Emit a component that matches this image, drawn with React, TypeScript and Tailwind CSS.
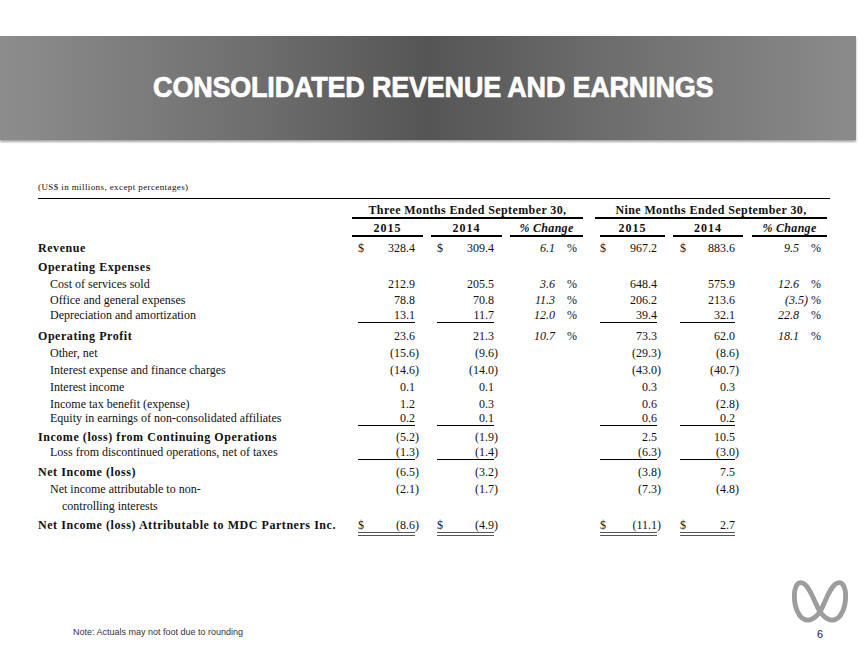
import React from "react";

type Row = {
  label: string;
  kind: "bold" | "sub" | "sub2";
  h: string;
  a?: string;
  b?: string;
  c?: string;
  d?: string;
  e?: string;
  f?: string;
  dollar?: boolean;
  line?: "single" | "double";
};

const rows: Row[] = [
  { label: "Revenue", kind: "bold", h: "h-[19px]", a: "328.4", b: "309.4", c: "6.1", d: "967.2", e: "883.6", f: "9.5", dollar: true },
  { label: "Operating Expenses", kind: "bold", h: "h-[17px]" },
  { label: "Cost of services sold", kind: "sub", h: "h-[16px]", a: "212.9", b: "205.5", c: "3.6", d: "648.4", e: "575.9", f: "12.6" },
  { label: "Office and general expenses", kind: "sub", h: "h-[15px]", a: "78.8", b: "70.8", c: "11.3", d: "206.2", e: "213.6", f: "(3.5)" },
  { label: "Depreciation and amortization", kind: "sub", h: "h-[21px]", a: "13.1", b: "11.7", c: "12.0", d: "39.4", e: "32.1", f: "22.8", line: "single" },
  { label: "Operating Profit", kind: "bold", h: "h-[17px]", a: "23.6", b: "21.3", c: "10.7", d: "73.3", e: "62.0", f: "18.1" },
  { label: "Other, net", kind: "sub", h: "h-[17px]", a: "(15.6)", b: "(9.6)", d: "(29.3)", e: "(8.6)" },
  { label: "Interest expense and finance charges", kind: "sub", h: "h-[17px]", a: "(14.6)", b: "(14.0)", d: "(43.0)", e: "(40.7)" },
  { label: "Interest income", kind: "sub", h: "h-[17px]", a: "0.1", b: "0.1", d: "0.3", e: "0.3" },
  { label: "Income tax benefit (expense)", kind: "sub", h: "h-[14px]", a: "1.2", b: "0.3", d: "0.6", e: "(2.8)" },
  { label: "Equity in earnings of non-consolidated affiliates", kind: "sub", h: "h-[19px]", a: "0.2", b: "0.1", d: "0.6", e: "0.2", line: "single" },
  { label: "Income (loss) from Continuing Operations", kind: "bold", h: "h-[15px]", a: "(5.2)", b: "(1.9)", d: "2.5", e: "10.5" },
  { label: "Loss from discontinued operations, net of taxes", kind: "sub", h: "h-[20px]", a: "(1.3)", b: "(1.4)", d: "(6.3)", e: "(3.0)", line: "single" },
  { label: "Net Income (loss)", kind: "bold", h: "h-[17px]", a: "(6.5)", b: "(3.2)", d: "(3.8)", e: "7.5" },
  { label: "Net income attributable to non-", kind: "sub", h: "h-[17px]", a: "(2.1)", b: "(1.7)", d: "(7.3)", e: "(4.8)" },
  { label: "controlling interests", kind: "sub2", h: "h-[19px]" },
  { label: "Net Income (loss) Attributable to MDC Partners Inc.", kind: "bold", h: "h-[20px]", a: "(8.6)", b: "(4.9)", d: "(11.1)", e: "2.7", dollar: true, line: "double" },
];

const grid = "grid grid-cols-[314px_71px_8px_71px_8px_73px_17px_65px_8px_70px_9px_75px]";

function Num({ v, dollar, line, ml }: { v?: string; dollar?: boolean; line?: "single" | "double"; ml: string }) {
  if (!v) return <div />;
  const neg = v.startsWith("(");
  const rule = line === "double" ? "border-b-[4px] border-double border-[#555]" : line === "single" ? "border-b border-black" : "";
  return (
    <div className={`flex justify-between leading-[14px] ${ml} mr-[8px] ${rule}`}>
      <span>{dollar ? "$" : ""}</span>
      <span className={neg ? "mr-[-4px]" : ""}>{v}</span>
    </div>
  );
}

function Pct({ v }: { v?: string }) {
  if (!v) return <div />;
  const neg = v.endsWith(")");
  return (
    <div className="flex justify-end pr-[6px] leading-[14px]">
      <span className="italic">{v}</span>
      <span className={neg ? "ml-[3px]" : "ml-[12px]"}>%</span>
    </div>
  );
}

function Logo() {
  return (
    <svg width="58" height="50" viewBox="0 0 60 50" fill="none">
      <path
        d="M30 34 C36 24 41 4 50 4 C58 4 59 26 51 38 C45 46 36 43 30 34 C24 25 19 4 10 4 C2 4 1 26 9 38 C15 46 24 43 30 34 Z"
        stroke="#9d9d9d"
        strokeWidth="5"
        strokeLinejoin="round"
      />
    </svg>
  );
}

export default function App() {
  return (
    <div className="relative h-[648px] w-[864px] overflow-hidden bg-white text-[#111] [font-family:'Liberation_Serif',serif]">
      <div className="mt-[36px] flex h-[104px] w-[856px] items-center justify-center bg-[linear-gradient(to_right,#8d8d8d_0%,#6e6e6e_30%,#555555_50%,#6c6c6c_70%,#8b8b8b_100%)] shadow-[0_2px_2px_rgba(0,0,0,0.35)]">
        <h1 className="ml-[10px] scale-x-[0.93] whitespace-nowrap text-[29px] font-bold tracking-[-0.2px] text-white [-webkit-text-stroke:0.7px_white] [font-family:'Liberation_Sans',Arial,sans-serif]">
          CONSOLIDATED REVENUE AND EARNINGS
        </h1>
      </div>

      <div className="ml-[38px] mt-[42px] w-[792px]">
        <div className="border-b border-black pb-[5px] text-[9px] leading-[11px] tracking-[0.4px]">(US$ in millions, except percentages)</div>

        <div className={`${grid} text-[12px] font-bold`}>
          <div />
          <div className="col-span-5 border-b-2 border-black pt-[4px] text-center leading-[14px] tracking-[0.4px]">
            Three Months Ended September 30,
          </div>
          <div />
          <div className="col-span-5 ml-[-5px] border-b-2 border-black pt-[4px] text-center leading-[14px] tracking-[0.4px]">
            Nine Months Ended September 30,
          </div>
        </div>
        <div className={`${grid} mt-[2px] text-[12px] font-bold`}>
          <div />
          <div className="border-b-2 border-black text-center leading-[14px] tracking-[1px]">2015</div>
          <div />
          <div className="border-b-2 border-black text-center leading-[14px] tracking-[1px]">2014</div>
          <div />
          <div className="border-b-2 border-black text-center italic leading-[14px] tracking-[0.3px]">% Change</div>
          <div />
          <div className="border-b-2 border-black text-center leading-[14px] tracking-[1px]">2015</div>
          <div />
          <div className="border-b-2 border-black text-center leading-[14px] tracking-[1px]">2014</div>
          <div />
          <div className="border-b-2 border-black text-center italic leading-[14px] tracking-[0.3px]">% Change</div>
        </div>

        <div className="mt-[4px] text-[12px]">
          {rows.map((r) => (
            <div key={r.label} className={`${grid} ${r.h} items-start`}>
              <div
                className={`whitespace-nowrap leading-[14px] ${
                  r.kind === "bold" ? "font-bold tracking-[0.55px]" : r.kind === "sub" ? "pl-[12px]" : "pl-[24px]"
                }`}
              >
                {r.label}
              </div>
              <Num v={r.a} dollar={r.dollar} line={r.line} ml="ml-[6px]" />
              <div />
              <Num v={r.b} dollar={r.dollar} line={r.line} ml="ml-[6px]" />
              <div />
              <Pct v={r.c} />
              <div />
              <Num v={r.d} dollar={r.dollar} line={r.line} ml="ml-0" />
              <div />
              <Num v={r.e} dollar={r.dollar} line={r.line} ml="ml-[7px]" />
              <div />
              <Pct v={r.f} />
            </div>
          ))}
        </div>
      </div>

      <div className="absolute left-[73px] top-[626px] text-[9px] leading-[12px] text-[#333] [font-family:'Liberation_Sans',Arial,sans-serif]">
        Note: Actuals may not foot due to rounding
      </div>
      <div className="absolute left-[791px] top-[578px]">
        <Logo />
      </div>
      <div className="absolute left-[817px] top-[627px] text-[11px] leading-[14px] text-[#222] [font-family:'Liberation_Sans',Arial,sans-serif]">
        6
      </div>
    </div>
  );
}
